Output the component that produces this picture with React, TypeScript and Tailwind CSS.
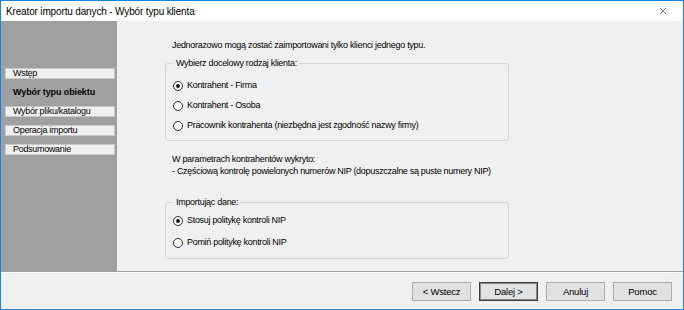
import { X } from "lucide-react";

type Radio = { label: string; checked?: boolean };

const clientTypes: Radio[] = [
  { label: "Kontrahent - Firma", checked: true },
  { label: "Kontrahent - Osoba" },
  { label: "Pracownik kontrahenta (niezbędna jest zgodność nazwy firmy)" },
];

const nipOptions: Radio[] = [
  { label: "Stosuj politykę kontroli NIP", checked: true },
  { label: "Pomiń politykę kontroli NIP" },
];

const steps = [
  { label: "Wstęp" },
  { label: "Wybór typu obiektu", active: true },
  { label: "Wybór pliku/katalogu" },
  { label: "Operacja importu" },
  { label: "Podsumowanie" },
];

function RadioRow({ label, checked }: Radio) {
  return (
    <div className="flex h-[13px] items-center gap-[4px]">
      <span className="flex h-[10px] w-[10px] shrink-0 items-center justify-center rounded-full border border-[#333333] bg-white">
        {checked && <span className="h-[4px] w-[4px] rounded-full bg-[#1a1a1a]" />}
      </span>
      <span>{label}</span>
    </div>
  );
}

function Button({ label, primary = false }: { label: string; primary?: boolean }) {
  return (
    <button
      className={`h-[19px] w-[59px] bg-[#e1e1e1] text-[9.5px] leading-none tracking-[-0.2px] text-black ${primary ? "border border-[#3c3c3c] shadow-[inset_0_0_0_1px_#8a8a8a]" : "border border-[#adadad]"}`}
    >
      {label}
    </button>
  );
}

export default function App() {
  return (
    <div className="flex h-[310px] w-[684px] flex-col border border-[#1883d7] bg-[#f0f0f0] font-['Liberation_Sans',Arial,sans-serif] text-[9px] tracking-[-0.3px] text-black">
      <div className="flex h-[20px] shrink-0 items-center justify-between bg-white pl-[5px] pr-[14px]">
        <span className="text-[10px] tracking-[-0.15px]">Kreator importu danych - Wybór typu klienta</span>
        <X size={12} strokeWidth={1.2} className="text-[#222]" />
      </div>

      <div className="flex h-[250px] shrink-0">
        <div className="flex w-[116px] shrink-0 flex-col gap-[8px] bg-[#a0a0a0] pl-[4px] pr-[2px] pt-[47px]">
          {steps.map((s) =>
            s.active ? (
              <div key={s.label} className="flex h-[11px] items-center pl-[8px] font-bold tracking-[-0.1px]">
                {s.label}
              </div>
            ) : (
              <div key={s.label} className="flex h-[11px] items-center border border-[#c8c8c8] bg-[#f0f0f0] pl-[7px]">
                {s.label}
              </div>
            ),
          )}
        </div>

        <div className="flex flex-1 flex-col pl-[48px] pt-[18px]">
          <p className="pl-[7px] leading-[13px]">Jednorazowo mogą zostać zaimportowani tylko klienci jednego typu.</p>

          <fieldset className="mt-[5px] w-[344px] rounded-[3px] border border-[#d5d5d5] px-[7px] pb-[8px]">
            <legend className="ml-[1px] px-[2px] leading-[13px]">Wybierz docelowy rodzaj klienta:</legend>
            <div className="mt-[9px] flex flex-col gap-[7px]">
              {clientTypes.map((r) => (
                <RadioRow key={r.label} {...r} />
              ))}
            </div>
          </fieldset>

          <p className="mt-[12px] pl-[7px] leading-[12px]">
            W parametrach kontrahentów wykryto:
            <br />- Częściową kontrolę powielonych numerów NIP (dopuszczalne są puste numery NIP)
          </p>

          <fieldset className="mt-[19px] w-[344px] rounded-[3px] border border-[#d5d5d5] px-[7px] pb-[9px]">
            <legend className="ml-[1px] px-[2px] leading-[13px]">Importując dane:</legend>
            <div className="mt-[5px] flex flex-col gap-[9px]">
              {nipOptions.map((r) => (
                <RadioRow key={r.label} {...r} />
              ))}
            </div>
          </fieldset>
        </div>
      </div>

      <div className="h-px shrink-0 bg-[#a0a0a0]" />
      <div className="h-px shrink-0 bg-white" />

      <div className="flex flex-1 items-start justify-end gap-[8px] pr-[11px] pt-[9px]">
        <Button label="< Wstecz" />
        <Button label="Dalej >" primary />
        <Button label="Anuluj" />
        <Button label="Pomoc" />
      </div>
    </div>
  );
}
